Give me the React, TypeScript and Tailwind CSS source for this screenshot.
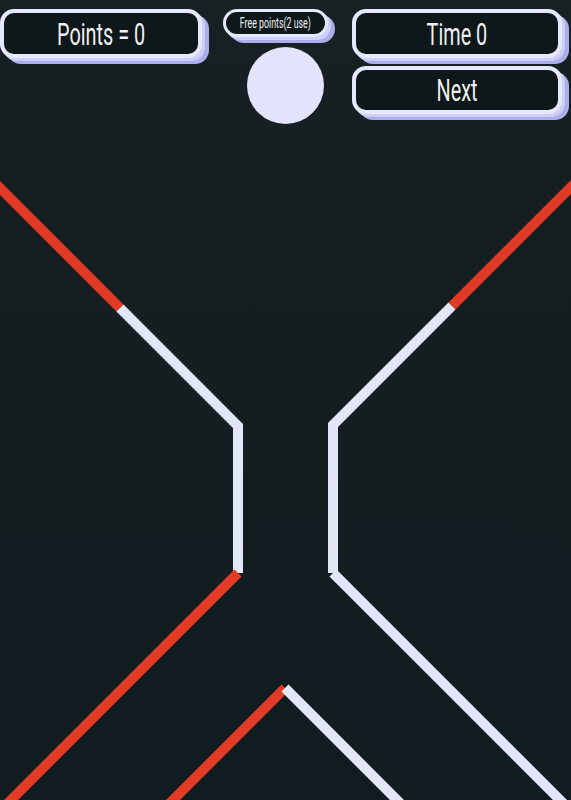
const FONT = "font-['Roboto','Liberation_Sans',sans-serif]"

function GameButton({ label, className = '' }: { label: string; className?: string }) {
  return (
    <button
      className={`flex items-center justify-center bg-[#0e1719] border-4 border-[#e6e8fb] rounded-[14px] shadow-[3px_3px_0_#cdd0f7,7px_6px_0_#abaeec] text-[#eef0f2] text-[32px] leading-none ${className}`}
    >
      <span className="inline-block scale-x-[0.62] whitespace-nowrap">{label}</span>
    </button>
  )
}

function Track() {
  const red = '#e23b25'
  const white = '#e3e6f7'
  return (
    <svg width="571" height="670" viewBox="0 130 571 670" className="block">
      <g fill="none" strokeWidth="10" strokeLinecap="butt" strokeLinejoin="miter">
        {/* left wall */}
        <polyline points="-8,180 120,308" stroke={red} />
        <polyline points="120,308 238,426 238,573" stroke={white} />
        <polyline points="238,573 -4,815" stroke={red} />
        {/* right wall */}
        <polyline points="579,179 452,306" stroke={red} />
        <polyline points="452,306 333,425 333,573" stroke={white} />
        <polyline points="333,573 575,815" stroke={white} />
        {/* bottom peak */}
        <polyline points="285,688 160,813" stroke={red} />
        <polyline points="285,688 410,813" stroke={white} />
      </g>
    </svg>
  )
}

export default function App() {
  return (
    <div className={`w-full h-[800px] overflow-hidden bg-linear-to-b from-[#172022] to-[#111c20] ${FONT}`}>
      <header className="flex items-start h-[130px] pt-[9px]">
        <GameButton label="Points = 0" className="w-[202px] h-[49px]" />

        <div className="flex flex-col ml-[21px]">
          <button className="w-[105px] h-[28px] flex items-center justify-center bg-[#0e1719] border-[3px] border-[#e6e8fb] rounded-full shadow-[3px_3px_0_#cdd0f7,7px_6px_0_#abaeec] text-[#eef0f2] text-[14px] leading-none">
            <span className="inline-block scale-x-[0.63] whitespace-nowrap">Free points(2 use)</span>
          </button>
          <div className="w-[77px] h-[77px] mt-[10px] ml-[24px] rounded-full bg-[#e3e3fb]" />
        </div>

        <div className="flex flex-col gap-[8px] ml-[24px]">
          <GameButton label="Time 0" className="w-[210px] h-[49px]" />
          <GameButton label="Next" className="w-[210px] h-[48px]" />
        </div>
      </header>

      <Track />
    </div>
  )
}
